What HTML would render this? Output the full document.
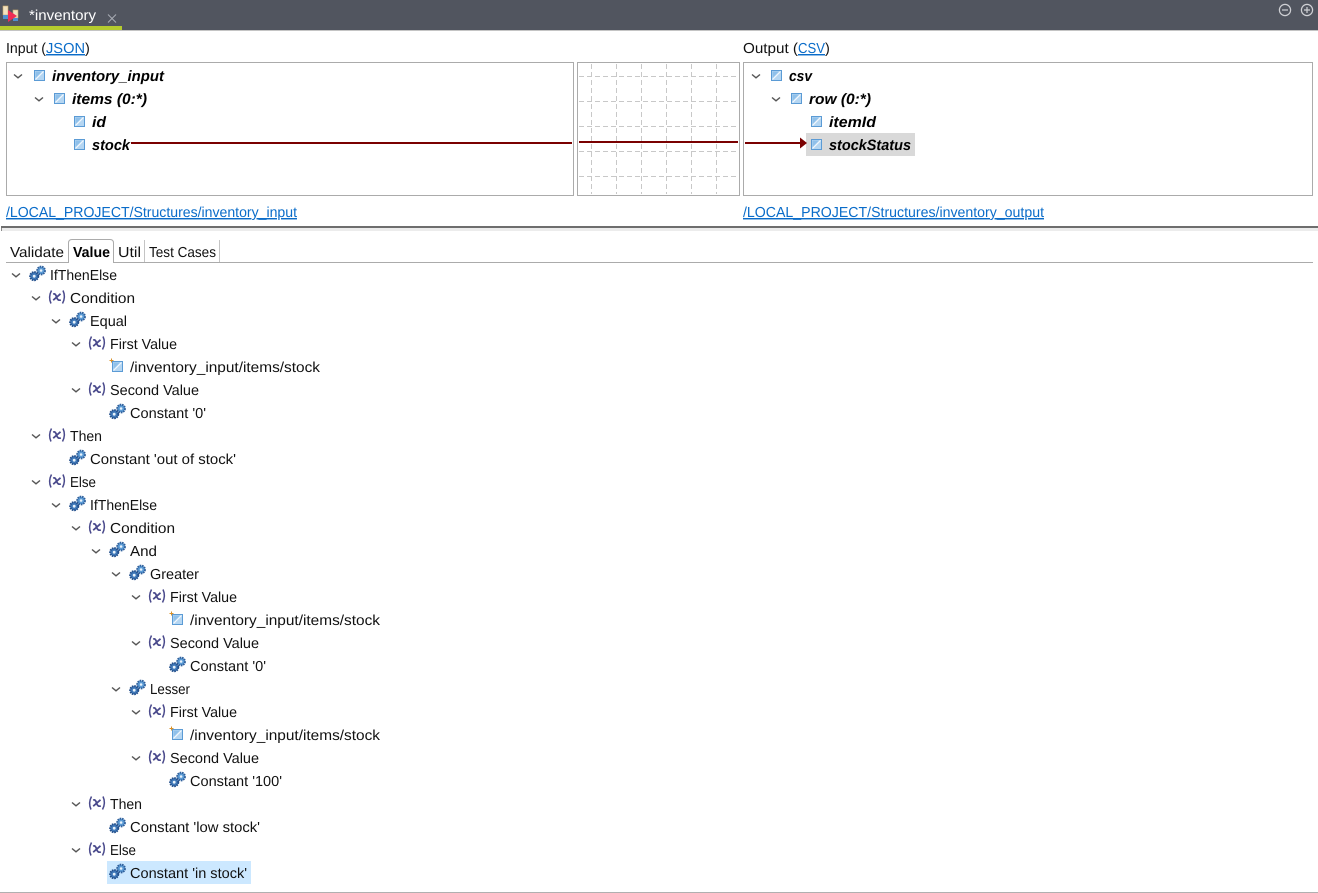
<!DOCTYPE html>
<html><head><meta charset="utf-8"><title>inventory</title>
<style>
html,body{margin:0;padding:0;background:#fff;width:1318px;height:893px;overflow:hidden}
svg{display:block}
text{font-family:"Liberation Sans",sans-serif;font-size:14.5px;fill:#111;text-rendering:geometricPrecision}
.b{font-weight:bold;font-style:italic;fill:#000;font-size:15px}
.l{fill:#0a6cc9;text-decoration:underline}
</style></head><body>
<svg width="1318" height="893" viewBox="0 0 1318 893" xmlns="http://www.w3.org/2000/svg">
<defs>
<g id="c"><path d="M-4-1.500L0 1.800L4-1.500" fill="none" stroke="#555" stroke-width="1.400"/></g>
<g id="g">
<circle cx="3.600" cy="-3" r="3.900" fill="#5b9bd5" stroke="#2f5f9b" stroke-width="1.900" stroke-dasharray="1.600 .8"/>
<circle cx="3.600" cy="-3" r="1.300" fill="#e8f2fb"/>
<circle cx="-3.300" cy="2.700" r="4.100" fill="#3f78b8" stroke="#24508c" stroke-width="1.900" stroke-dasharray="1.600 .8"/>
<circle cx="-3.300" cy="2.700" r="1.400" fill="#e8f2fb"/>
</g>
<g id="x" fill="none" stroke="#4a4a8c" stroke-width="1.500">
<path d="M-5.500-6.500Q-9 0-6 6.500"/><path d="M6-6.500Q9 0 5.500 6.500"/>
<path d="M-3.800-2.800Q-1.500-4-.5 0T3.800 3" stroke-width="1.700"/><path d="M3.500-3.200L-3.800 3.200" stroke-width="1.700"/>
</g>
<g id="f"><rect x="-4.500" y="-4.500" width="10" height="10" fill="#b5d6f2" stroke="#5b9bd5"/><path d="M-3.500 4.500L4.500-3.500" stroke="#f2f8fd" stroke-width="1.200"/><path d="M-3.500-3.500L3-3.500L-3.500 3Z" fill="#8fc0ea"/></g>
<g id="p"><use href="#f" x="0" y="0"/><path d="M-5.500-7.500v4M-7.500-5.500h4" stroke="#d8912a" stroke-width="1"/></g>
</defs>

<!-- title bar -->
<rect x="0" y="0" width="1318" height="30" fill="#51555f"/>
<rect x="0" y="30" width="1318" height="1" fill="#c4c4c4"/>
<rect x="0" y="26" width="122" height="4" fill="#b5cc2e"/>
<rect x="3" y="6" width="5" height="9" fill="#f2e2c0" stroke="#c9a86a" stroke-width=".6"/>
<rect x="13" y="10" width="5" height="8" fill="#f2e2c0" stroke="#c9a86a" stroke-width=".6"/>
<rect x="3" y="15" width="5" height="4" fill="#4f8fd0"/>
<rect x="13" y="18" width="5" height="3" fill="#4f8fd0"/>
<path d="M8 10L17 16L8 22Z" fill="#ef2d56"/>
<text x="29" y="20" textLength="67" lengthAdjust="spacingAndGlyphs" style="fill:#fff">*inventory</text>
<path d="M108 14.500L116 22.500M116 14.500L108 22.500" stroke="#a9adb5" stroke-width="1"/>
<g fill="none" stroke="#cfd0d4" stroke-width="1.200">
<circle cx="1285" cy="10" r="5.600"/><path d="M1282 10h6"/>
<circle cx="1307" cy="10" r="5.600"/><path d="M1304 10h6M1307 7v6"/>
</g>

<!-- mapping headers -->
<text x="6" y="53" textLength="40" lengthAdjust="spacingAndGlyphs">Input (</text>
<text x="46" y="53" class="l" textLength="39" lengthAdjust="spacingAndGlyphs">JSON</text>
<text x="85" y="53">)</text>
<text x="743" y="53" textLength="55" lengthAdjust="spacingAndGlyphs">Output (</text>
<text x="798" y="53" class="l" textLength="27" lengthAdjust="spacingAndGlyphs">CSV</text>
<text x="825" y="53">)</text>

<!-- boxes -->
<rect x="6.500" y="62.500" width="567" height="133" fill="#fff" stroke="#ababab"/>
<rect x="577.500" y="62.500" width="162" height="133" fill="#fff" stroke="#ababab"/>
<rect x="743.500" y="62.500" width="569" height="133" fill="#fff" stroke="#ababab"/>
<g stroke="#c8c8c8" stroke-dasharray="5 3" fill="none">
<path d="M591.500 64V194M616.500 64V194M641.500 64V194M666.500 64V194M691.500 64V194M716.500 64V194"/>
<path d="M579 76.500H738M579 101.500H738M579 126.500H738M579 151.500H738M579 176.500H738"/>
</g>

<!-- input tree -->
<use href="#c" x="18" y="76"/><use href="#f" x="39" y="75"/>
<text x="52" y="81" class="b" textLength="112" lengthAdjust="spacingAndGlyphs">inventory_input</text>
<use href="#c" x="39" y="99"/><use href="#f" x="59" y="98"/>
<text x="72" y="104" class="b" textLength="75" lengthAdjust="spacingAndGlyphs">items (0:*)</text>
<use href="#f" x="79" y="121"/>
<text x="92" y="127" class="b" textLength="14" lengthAdjust="spacingAndGlyphs">id</text>
<use href="#f" x="79" y="144"/>
<text x="92" y="150" class="b" textLength="38" lengthAdjust="spacingAndGlyphs">stock</text>

<!-- output tree -->
<rect x="806" y="133" width="109" height="23" fill="#d9d9d9"/>
<use href="#c" x="756" y="76"/><use href="#f" x="776" y="75"/>
<text x="789" y="81" class="b" textLength="23" lengthAdjust="spacingAndGlyphs">csv</text>
<use href="#c" x="776" y="99"/><use href="#f" x="796" y="98"/>
<text x="809" y="104" class="b" textLength="62" lengthAdjust="spacingAndGlyphs">row (0:*)</text>
<use href="#f" x="816" y="121"/>
<text x="829" y="127" class="b" textLength="47" lengthAdjust="spacingAndGlyphs">itemId</text>
<use href="#f" x="816" y="144"/>
<text x="829" y="150" class="b" textLength="82" lengthAdjust="spacingAndGlyphs">stockStatus</text>

<!-- mapping line -->
<g fill="#7a0000">
<rect x="131" y="142" width="441" height="2"/>
<rect x="579" y="141" width="159" height="2"/>
<rect x="745" y="142" width="56" height="2"/>
<path d="M800 137.500L807 143L800 148.500Z"/>
</g>

<!-- links -->
<text x="6" y="217" class="l" textLength="291" lengthAdjust="spacingAndGlyphs">/LOCAL_PROJECT/Structures/inventory_input</text>
<text x="743" y="217" class="l" textLength="301" lengthAdjust="spacingAndGlyphs">/LOCAL_PROJECT/Structures/inventory_output</text>

<!-- sash -->
<rect x="1" y="226" width="1317" height="2" fill="#6e6e6e"/>
<rect x="1" y="228" width="1317" height="3" fill="#ececec"/>
<rect x="1" y="228" width="1" height="3" fill="#8a8a8a"/>

<!-- tabs -->
<rect x="6" y="262" width="1307" height="1" fill="#ababab"/>
<path d="M68.500 263V243Q68.500 239.500 72 239.500H110Q113.500 239.500 113.500 243V263" fill="#fff" stroke="#ababab"/>
<rect x="69" y="262" width="44" height="1" fill="#fff"/>
<rect x="144" y="240" width="1" height="22" fill="#c4c4c4"/>
<rect x="219" y="240" width="1" height="22" fill="#c4c4c4"/>
<text x="10" y="257" textLength="54" lengthAdjust="spacingAndGlyphs">Validate</text>
<text x="73" y="257" textLength="37" lengthAdjust="spacingAndGlyphs" style="font-weight:bold;fill:#000">Value</text>
<text x="118" y="257" textLength="23" lengthAdjust="spacingAndGlyphs">Util</text>
<text x="149" y="257" textLength="67" lengthAdjust="spacingAndGlyphs">Test Cases</text>

<!-- selection -->
<rect x="107" y="861" width="144" height="23" fill="#cce8ff"/>

<!-- value tree -->
<use href="#c" x="16" y="275"/><use href="#g" x="37.500" y="273.500"/><text x="50" y="280" textLength="67" lengthAdjust="spacingAndGlyphs">IfThenElse</text>
<use href="#c" x="36" y="298"/><use href="#x" x="57" y="297"/><text x="70" y="303" textLength="65" lengthAdjust="spacingAndGlyphs">Condition</text>
<use href="#c" x="56" y="321"/><use href="#g" x="77.500" y="319.500"/><text x="90" y="326" textLength="37" lengthAdjust="spacingAndGlyphs">Equal</text>
<use href="#c" x="76" y="344"/><use href="#x" x="97" y="343"/><text x="110" y="349" textLength="67" lengthAdjust="spacingAndGlyphs">First Value</text>
<use href="#p" x="117" y="366"/><text x="130" y="372" textLength="190" lengthAdjust="spacingAndGlyphs">/inventory_input/items/stock</text>
<use href="#c" x="76" y="390"/><use href="#x" x="97" y="389"/><text x="110" y="395" textLength="89" lengthAdjust="spacingAndGlyphs">Second Value</text>
<use href="#g" x="117.500" y="411.500"/><text x="130" y="418" textLength="76" lengthAdjust="spacingAndGlyphs">Constant '0'</text>
<use href="#c" x="36" y="436"/><use href="#x" x="57" y="435"/><text x="70" y="441" textLength="32" lengthAdjust="spacingAndGlyphs">Then</text>
<use href="#g" x="77.500" y="457.500"/><text x="90" y="464" textLength="146" lengthAdjust="spacingAndGlyphs">Constant 'out of stock'</text>
<use href="#c" x="36" y="482"/><use href="#x" x="57" y="481"/><text x="70" y="487" textLength="26" lengthAdjust="spacingAndGlyphs">Else</text>
<use href="#c" x="56" y="505"/><use href="#g" x="77.500" y="503.500"/><text x="90" y="510" textLength="67" lengthAdjust="spacingAndGlyphs">IfThenElse</text>
<use href="#c" x="76" y="528"/><use href="#x" x="97" y="527"/><text x="110" y="533" textLength="65" lengthAdjust="spacingAndGlyphs">Condition</text>
<use href="#c" x="96" y="551"/><use href="#g" x="117.500" y="549.500"/><text x="130" y="556" textLength="27" lengthAdjust="spacingAndGlyphs">And</text>
<use href="#c" x="116" y="574"/><use href="#g" x="137.500" y="572.500"/><text x="150" y="579" textLength="49" lengthAdjust="spacingAndGlyphs">Greater</text>
<use href="#c" x="136" y="597"/><use href="#x" x="157" y="596"/><text x="170" y="602" textLength="67" lengthAdjust="spacingAndGlyphs">First Value</text>
<use href="#p" x="177" y="619"/><text x="190" y="625" textLength="190" lengthAdjust="spacingAndGlyphs">/inventory_input/items/stock</text>
<use href="#c" x="136" y="643"/><use href="#x" x="157" y="642"/><text x="170" y="648" textLength="89" lengthAdjust="spacingAndGlyphs">Second Value</text>
<use href="#g" x="177.500" y="664.500"/><text x="190" y="671" textLength="76" lengthAdjust="spacingAndGlyphs">Constant '0'</text>
<use href="#c" x="116" y="689"/><use href="#g" x="137.500" y="687.500"/><text x="150" y="694" textLength="40" lengthAdjust="spacingAndGlyphs">Lesser</text>
<use href="#c" x="136" y="712"/><use href="#x" x="157" y="711"/><text x="170" y="717" textLength="67" lengthAdjust="spacingAndGlyphs">First Value</text>
<use href="#p" x="177" y="734"/><text x="190" y="740" textLength="190" lengthAdjust="spacingAndGlyphs">/inventory_input/items/stock</text>
<use href="#c" x="136" y="758"/><use href="#x" x="157" y="757"/><text x="170" y="763" textLength="89" lengthAdjust="spacingAndGlyphs">Second Value</text>
<use href="#g" x="177.500" y="779.500"/><text x="190" y="786" textLength="92" lengthAdjust="spacingAndGlyphs">Constant '100'</text>
<use href="#c" x="76" y="804"/><use href="#x" x="97" y="803"/><text x="110" y="809" textLength="32" lengthAdjust="spacingAndGlyphs">Then</text>
<use href="#g" x="117.500" y="825.500"/><text x="130" y="832" textLength="130" lengthAdjust="spacingAndGlyphs">Constant 'low stock'</text>
<use href="#c" x="76" y="850"/><use href="#x" x="97" y="849"/><text x="110" y="855" textLength="26" lengthAdjust="spacingAndGlyphs">Else</text>
<use href="#g" x="117.500" y="871.500"/><text x="130" y="878" textLength="117" lengthAdjust="spacingAndGlyphs">Constant 'in stock'</text>

<rect x="0" y="892" width="1318" height="1" fill="#b0b0b0"/>
</svg>
</body></html>
